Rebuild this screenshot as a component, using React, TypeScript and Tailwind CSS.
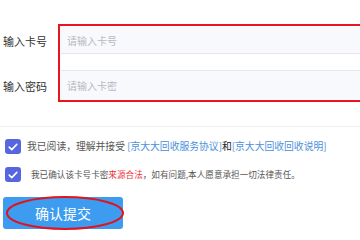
import React from 'react';

const font = { fontFamily: '"Noto Sans CJK SC", "Liberation Sans", sans-serif' };

const Check = () => (
  <span className="flex h-[15px] w-[16px] shrink-0 items-center justify-center rounded-[3px] bg-[#5566df]">
    <svg width="10" height="8" viewBox="0 0 10 8" fill="none">
      <path d="M1.2 4.1 3.8 6.6 8.8 1.4" stroke="white" strokeWidth="1.6" strokeLinecap="round" strokeLinejoin="round" />
    </svg>
  </span>
);

export default function App() {
  return (
    <div className="h-[240px] w-[360px] overflow-hidden bg-white text-[#333]" style={font}>
      {/* form rows */}
      <div className="flex pt-[24px]">
        <div className="flex w-[58px] shrink-0 flex-col pl-[3px] text-[11px]">
          <div className="flex h-[31px] items-center pt-[3px]">输入卡号</div>
          <div className="h-[16px]" />
          <div className="flex h-[31px] items-center">输入密码</div>
        </div>
        <div className="mr-[-10px] flex-1 border-2 border-r-0 border-[#e8141e] px-[1px] py-[1px]">
          <div className="flex h-[27px] items-center border-b border-[#e6e7ee] bg-[#f8f9fc] pl-[6px] text-[10px] text-[#b8b8c0]">
            请输入卡号
          </div>
          <div className="h-[17px] border-b border-[#e6e7ee]" />
          <div className="flex h-[28px] items-center bg-[#f8f9fc] pl-[6px] text-[10px] text-[#b8b8c0]">
            请输入卡密
          </div>
        </div>
      </div>

      <div className="mt-[24px] h-px bg-[#eeeef2]" />

      {/* agreements */}
      <div className="flex flex-col pl-[5px] pt-[12px]">
        <div className="flex h-[15px] items-center gap-[6px] text-[9.8px]">
          <Check />
          <span className="whitespace-nowrap text-[#555]">
            我已阅读，理解并接受 <span className="text-[#4b8fdc]">[京大大回收服务协议]</span>
            <span className="text-[#222]">和</span>
            <span className="text-[#4b8fdc]">[京大大回收回收说明]</span>
          </span>
        </div>
        <div className="mt-[13px] flex h-[15px] items-center gap-[10px] text-[8.6px]">
          <Check />
          <span className="whitespace-nowrap text-[#555]">
            我已确认该卡号卡密<span className="text-[#f0323c]">来源合法</span>，如有问题,本人愿意承担一切法律责任。
          </span>
        </div>
      </div>

      {/* submit */}
      <div className="relative ml-[3px] mt-[15px] w-[120px]">
        <button className="flex h-[32px] w-[120px] items-center justify-center rounded-[3px] bg-[#3d9bf0] text-[14px] text-white">
          确认提交
        </button>
        <svg className="pointer-events-none absolute left-[2px] top-[-2px]" width="120" height="36" viewBox="0 0 120 36">
          <ellipse cx="60" cy="18" rx="58" ry="16" fill="none" stroke="#e0141e" strokeWidth="2" />
        </svg>
      </div>
    </div>
  );
}
